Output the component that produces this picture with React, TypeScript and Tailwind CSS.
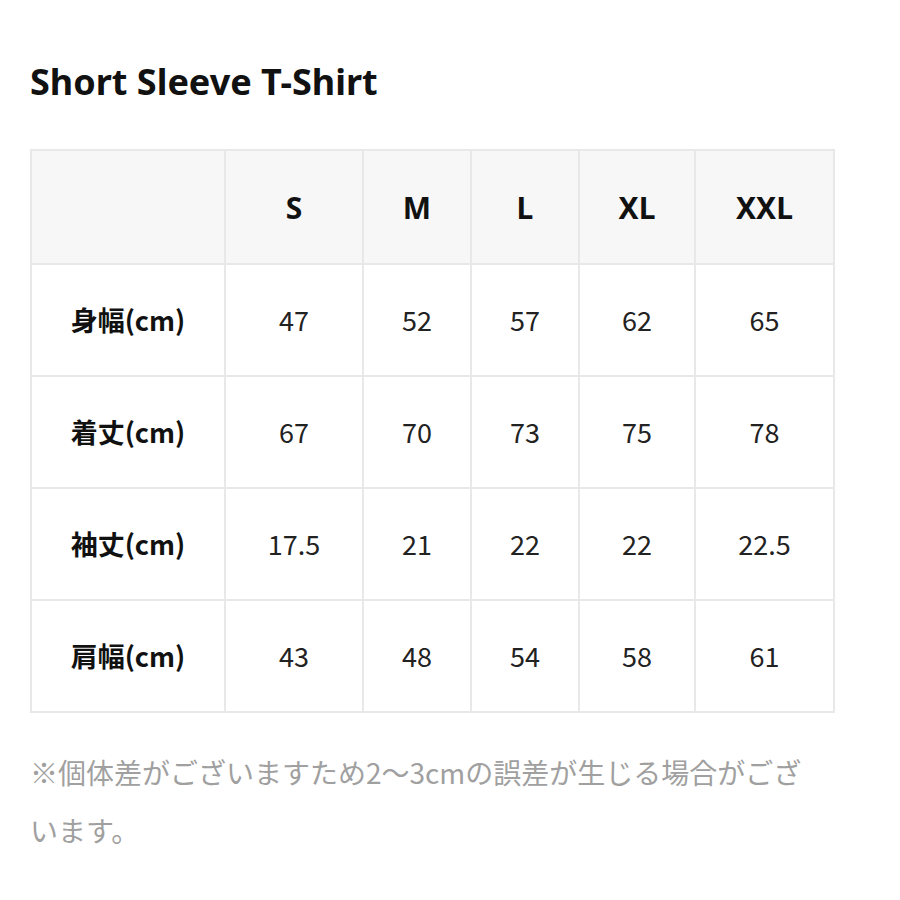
const sizes = ["S", "M", "L", "XL", "XXL"];

const rows: { label: string; values: string[] }[] = [
  { label: "身幅(cm)", values: ["47", "52", "57", "62", "65"] },
  { label: "着丈(cm)", values: ["67", "70", "73", "75", "78"] },
  { label: "袖丈(cm)", values: ["17.5", "21", "22", "22", "22.5"] },
  { label: "肩幅(cm)", values: ["43", "48", "54", "58", "61"] },
];

const widths = [194, 138, 108, 108, 116, 139];

export default function App() {
  return (
    <div className="min-h-[900px] w-[900px] bg-white pl-[30px] pt-[58px] font-['Noto_Sans_CJK_JP',sans-serif] text-[#111]">
      <h1 className="font-['Noto_Sans',sans-serif] text-[36px] font-bold leading-[48px]">Short Sleeve T-Shirt</h1>

      <table className="mt-[43px] w-[803px] table-fixed border-collapse">
        <colgroup>
          {widths.map((w, i) => (
            <col key={i} style={{ width: w }} />
          ))}
        </colgroup>
        <thead>
          <tr className="h-[114px] bg-[#f7f7f7]">
            <th className="border-2 border-[#e8e8e8]" />
            {sizes.map((s) => (
              <th key={s} className="border-2 border-[#e8e8e8] font-['Noto_Sans',sans-serif] text-[30px] font-bold">
                {s}
              </th>
            ))}
          </tr>
        </thead>
        <tbody>
          {rows.map((r) => (
            <tr key={r.label} className="h-[112px]">
              <td className="border-2 border-[#e8e8e8] text-center text-[27px] font-bold">{r.label}</td>
              {r.values.map((v, i) => (
                <td key={i} className="border-2 border-[#e8e8e8] text-center text-[27px] text-[#222]">
                  {v}
                </td>
              ))}
            </tr>
          ))}
        </tbody>
      </table>

      <p className="mt-[30px] text-[28px] leading-[58px] text-[#a0a0a0]">
        ※個体差がございますため2〜3cmの誤差が生じる場合がござ
        <br />
        います。
      </p>
    </div>
  );
}
